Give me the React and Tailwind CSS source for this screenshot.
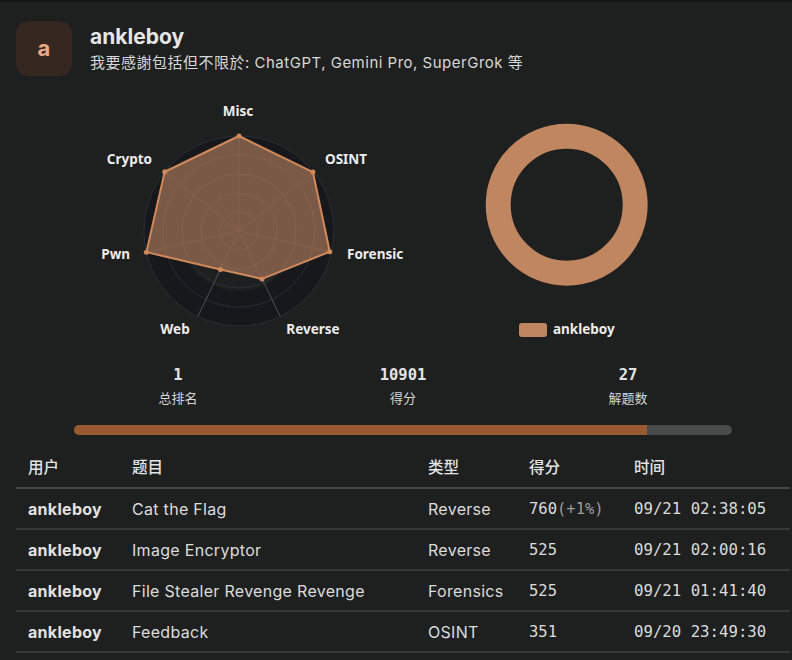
import React from 'react';

const AXES = ['Misc', 'OSINT', 'Forensic', 'Reverse', 'Web', 'Pwn', 'Crypto'];
const VALUES = [1, 0.995, 0.98, 0.56, 0.45, 1, 1];

const SOLVES = [
  { user: 'ankleboy', title: 'Cat the Flag', type: 'Reverse', score: '760', bonus: '(+1%)', time: '09/21 02:38:05' },
  { user: 'ankleboy', title: 'Image Encryptor', type: 'Reverse', score: '525', time: '09/21 02:00:16' },
  { user: 'ankleboy', title: 'File Stealer Revenge Revenge', type: 'Forensics', score: '525', time: '09/21 01:41:40' },
  { user: 'ankleboy', title: 'Feedback', type: 'OSINT', score: '351', time: '09/20 23:49:30' },
];

const mono = 'font-["DejaVu_Sans_Mono","Liberation_Mono",monospace]';

const RadarChart = () => {
  const cx = 159;
  const cy = 133;
  const R = 95;
  const rings = [19, 38, 57, 76, 95];
  const pt = (i, r) => {
    const a = (i * 2 * Math.PI) / 7;
    return [cx + r * Math.sin(a), cy - r * Math.cos(a)];
  };
  const poly = VALUES.map((v, i) => pt(i, v * R).join(',')).join(' ');

  return (
    <svg width="340" height="250" className="shrink-0">
      <defs>
        <clipPath id="radar-clip">
          <polygon points={poly} />
        </clipPath>
      </defs>
      {/* split areas */}
      <circle cx={cx} cy={cy} r={R} fill="#16181c" />
      <circle cx={cx} cy={cy} r={60} fill="#1e1f1f" />
      {rings.map((r) => (
        <circle key={r} cx={cx} cy={cy} r={r} fill="none" stroke="#2a2e36" strokeWidth="1" />
      ))}
      {AXES.map((_, i) => {
        const [x, y] = pt(i, R);
        return <line key={i} x1={cx} y1={cy} x2={x} y2={y} stroke="#4d5056" strokeWidth="1" />;
      })}
      <polygon points={poly} fill="#7a5946" />
      <g clipPath="url(#radar-clip)">
        {rings.map((r) => (
          <circle key={'g' + r} cx={cx} cy={cy} r={r} fill="none" stroke="#86634f" strokeWidth="1" />
        ))}
        {AXES.map((_, i) => {
          const [x, y] = pt(i, R);
          return <line key={'a' + i} x1={cx} y1={cy} x2={x} y2={y} stroke="#86634f" strokeWidth="1" />;
        })}
      </g>
      <polygon points={poly} fill="none" stroke="#d2895a" strokeWidth="2" strokeLinejoin="round" />
      {VALUES.map((v, i) => {
        const [x, y] = pt(i, v * R);
        return <circle key={'d' + i} cx={x} cy={y} r="2.5" fill="#d2895a" />;
      })}
      <g fill="#ececec" fontSize="13.5" fontWeight="700" fontFamily="'Noto Sans', sans-serif" dominantBaseline="middle">
        <text x="158" y="14" textAnchor="middle">Misc</text>
        <text x="245" y="62">OSINT</text>
        <text x="72" y="62" textAnchor="end">Crypto</text>
        <text x="267" y="157">Forensic</text>
        <text x="50" y="157" textAnchor="end">Pwn</text>
        <text x="95" y="232" textAnchor="middle">Web</text>
        <text x="233" y="232" textAnchor="middle">Reverse</text>
      </g>
    </svg>
  );
};

const DonutChart = () => (
  <svg width="300" height="250" className="shrink-0">
    <circle cx="96.7" cy="106.7" r="68.5" fill="none" stroke="#c08660" strokeWidth="25" />
    <rect x="49" y="225" width="28" height="14" rx="3" fill="#c08660" />
    <text x="83" y="232.5" fill="#ececec" fontSize="13.5" fontWeight="700" fontFamily="'Noto Sans', sans-serif" dominantBaseline="middle">
      ankleboy
    </text>
  </svg>
);

const Stat = ({ value, label }) => (
  <div className="flex flex-col items-center">
    <div className={`${mono} text-[15.5px] font-bold leading-[20px] text-[#e4e4e4]`}>{value}</div>
    <div className="mt-[3px] text-[13px] leading-[20px] text-[#d6d6d6]">{label}</div>
  </div>
);

const Cell = ({ className = '', children }) => <td className={`pl-3 ${className}`}>{children}</td>;

export default function App() {
  return (
    <div className='min-h-[660px] w-[792px] overflow-hidden border-t-2 border-[#141515] bg-[#1e1f1f] font-["Inter","Noto_Sans_CJK_SC",sans-serif] text-[#e2e2e2]'>
      {/* header */}
      <div className="flex items-center gap-[18px] pl-4 pt-[19px]">
        <div className="flex h-[55px] w-14 items-center justify-center rounded-xl bg-[#33271f] text-[22px] font-bold text-[#e9a887]">
          a
        </div>
        <div className="flex flex-col">
          <div className="text-[21px] font-bold leading-[26px] text-[#e6e6e6]">ankleboy</div>
          <div className="mt-[3px] text-[15px] leading-[20px] tracking-[0.5px] text-[#d8d8d8]">
            我要感謝包括但不限於: ChatGPT, Gemini Pro, SuperGrok 等
          </div>
        </div>
      </div>

      {/* charts */}
      <div className="mt-[22px] flex gap-[50px] pl-[80px]">
        <RadarChart />
        <DonutChart />
      </div>

      {/* stats */}
      <div className="mt-[17px] grid grid-cols-[220px_230px_220px] pl-[68px]">
        <Stat value="1" label="总排名" />
        <Stat value="10901" label="得分" />
        <Stat value="27" label="解题数" />
      </div>

      <div className="ml-[74px] mt-[17px] flex h-[10px] w-[658px] overflow-hidden rounded-full bg-[#4a4c4c]">
        <div className="h-full w-[573px] bg-[#9a5a31]" />
      </div>

      {/* table */}
      <table className="ml-4 mt-[13px] w-[774px] table-fixed border-collapse text-left">
        <colgroup>
          <col className="w-[104px]" />
          <col className="w-[296px]" />
          <col className="w-[101px]" />
          <col className="w-[105px]" />
          <col />
        </colgroup>
        <thead>
          <tr className="border-b-2 border-[#464848] text-[15.5px] text-[#e4e4e4]">
            <th className="h-[40px] pl-3 font-medium">用户</th>
            <th className="pl-3 font-medium">题目</th>
            <th className="pl-3 font-medium">类型</th>
            <th className="pl-3 font-medium">得分</th>
            <th className="pl-3 font-medium">时间</th>
          </tr>
        </thead>
        <tbody>
          {SOLVES.map((s, i) => (
            <tr key={i} className="border-b-2 border-[#363838] text-[16px] tracking-[0.3px] text-[#dcdcdc]">
              <Cell className="h-[41px] font-bold text-[#e2e2e2]">{s.user}</Cell>
              <Cell className="whitespace-nowrap">{s.title}</Cell>
              <Cell>{s.type}</Cell>
              <Cell className={`${mono} pt-[2px] text-[15.5px] tracking-normal`}>
                {s.score}
                {s.bonus && <span className="text-[#9c9c9c]">{s.bonus}</span>}
              </Cell>
              <Cell className={`${mono} pt-[1px] text-[15.7px] tracking-normal`}>{s.time}</Cell>
            </tr>
          ))}
        </tbody>
      </table>
    </div>
  );
}
